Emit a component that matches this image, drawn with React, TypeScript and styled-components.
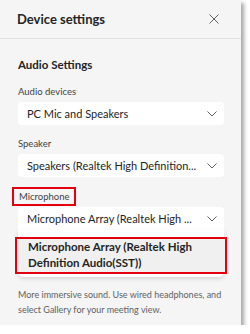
import styled, { createGlobalStyle } from 'styled-components';

const GlobalStyle = createGlobalStyle`
  html, body {
    margin: 0;
    padding: 0;
    background: #ffffff;
  }
  body {
    font-family: 'Segoe UI', Lato, 'Noto Sans', sans-serif;
    color: #242424;
  }
`;

const Panel = styled.div`
  width: 241px;
  height: 325px;
  background: #f5f5f5;
  box-shadow: 3px 3px 4px rgba(0, 0, 0, 0.35);
`;

const Header = styled.div`
  display: flex;
  align-items: center;
  justify-content: space-between;
  height: 38px;
  padding: 0 22px 0 17px;
  border-bottom: 1px solid #e1e1e1;
`;

const Title = styled.h1`
  margin: 0;
  font-size: 13px;
  font-weight: 700;
  color: #242424;
`;

const CloseButton = styled.button`
  border: none;
  background: none;
  padding: 0;
  width: 10px;
  height: 10px;
  display: grid;
  place-content: center;
`;

const Body = styled.div`
  padding: 18px 17px 0 18px;
  display: flex;
  flex-direction: column;
`;

const SectionTitle = styled.h2`
  margin: 0 0 12px;
  font-size: 11.5px;
  line-height: 16px;
  font-weight: 700;
  color: #242424;
`;

const Label = styled.div<{ highlighted?: boolean }>`
  font-size: 9.5px;
  color: #424242;
  line-height: 14px;
  margin: 0 0 3px;
  align-self: flex-start;
  ${({ highlighted }) =>
    highlighted &&
    `
    margin: -2px 0 1px -6px;
    padding: 1px 4px 0 5px;
    border: 2px solid #e3000f;
  `}
`;

const Select = styled.div<{ open?: boolean }>`
  display: flex;
  align-items: center;
  gap: 6px;
  height: 23px;
  background: #ffffff;
  border-radius: ${({ open }) => (open ? '4px 4px 0 0' : '4px')};
  padding: 0 7px 0 9px;
  margin-bottom: ${({ open }) => (open ? '0' : '12px')};
  font-size: 11px;
  color: #242424;
`;

const SelectText = styled.span`
  flex: 1;
  min-width: 0;
  white-space: nowrap;
  overflow: hidden;
`;

const Menu = styled.div`
  background: #ffffff;
  border-radius: 0 0 5px 5px;
  box-shadow: 0 2px 4px rgba(0, 0, 0, 0.12);
  padding: 7px 0 3px;
`;

const MenuItem = styled.div<{ selected?: boolean }>`
  margin: 0 -3px;
  padding: 0 8px 1px 11px;
  font-size: 11.5px;
  line-height: 16px;
  font-weight: 700;
  color: #242424;
  background: ${({ selected }) => (selected ? '#f0f0f0' : 'transparent')};
  border: 2px solid ${({ selected }) => (selected ? '#e3000f' : 'transparent')};
`;

const Note = styled.p`
  margin: 10px 0 0;
  font-size: 9px;
  line-height: 15px;
  color: #616161;
`;

const Chevron = () => (
  <svg width="10" height="6" viewBox="0 0 10 6" fill="none">
    <path d="M0.5 0.5 L5 5 L9.5 0.5" stroke="#616161" strokeWidth="1" />
  </svg>
);

const CloseIcon = () => (
  <svg width="10" height="10" viewBox="0 0 10 10" fill="none">
    <path d="M0.5 0.5 L9.5 9.5 M9.5 0.5 L0.5 9.5" stroke="#616161" strokeWidth="1" />
  </svg>
);

const App = () => (
  <>
    <GlobalStyle />
    <Panel>
      <Header>
        <Title>Device settings</Title>
        <CloseButton aria-label="Close">
          <CloseIcon />
        </CloseButton>
      </Header>
      <Body>
        <SectionTitle>Audio Settings</SectionTitle>
        <Label>Audio devices</Label>
        <Select>
          <SelectText>PC Mic and Speakers</SelectText>
          <Chevron />
        </Select>
        <Label>Speaker</Label>
        <Select>
          <SelectText>Speakers (Realtek High Definition...</SelectText>
          <Chevron />
        </Select>
        <Label highlighted>Microphone</Label>
        <Select open>
          <SelectText>Microphone Array (Realtek High ...</SelectText>
          <Chevron />
        </Select>
        <Menu>
          <MenuItem selected>Microphone Array (Realtek High Definition Audio(SST))</MenuItem>
        </Menu>
        <Note>More immersive sound. Use wired headphones, and select Gallery for your meeting view.</Note>
      </Body>
    </Panel>
  </>
);

export default App;
